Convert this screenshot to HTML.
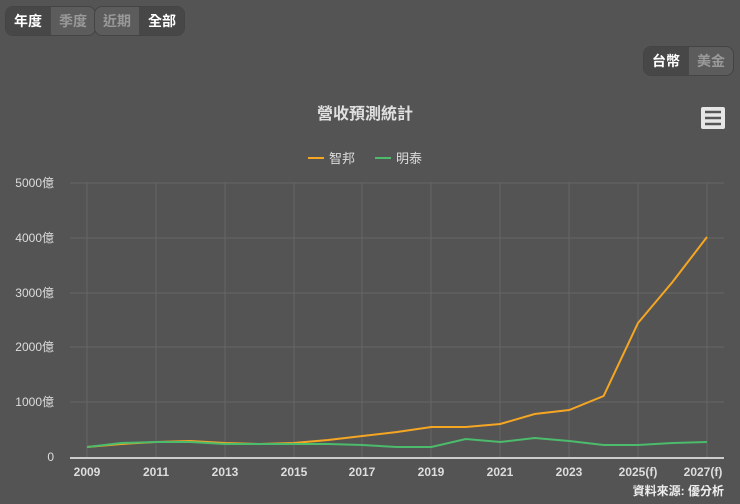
<!DOCTYPE html>
<html><head><meta charset="utf-8"><style>
body{margin:0;width:740px;height:504px;background:#545454;font-family:"Liberation Sans","Noto Sans CJK TC",sans-serif;position:relative;overflow:hidden}
.grp{position:absolute;display:flex;border:1px solid #444;border-radius:8px;overflow:hidden;background:#5c5c5c}
.grp div{padding:0 8px;height:28px;line-height:28px;font-size:14px;font-weight:bold;color:#999}
.grp div.on{background:#474747;color:#fff}
.grp div+div{border-left:1px solid #484848}
</style></head><body>
<div class="grp" style="left:5px;top:6px"><div class="on">年度</div><div>季度</div></div>
<div class="grp" style="left:94px;top:6px"><div>近期</div><div class="on">全部</div></div>
<div class="grp" style="left:643px;top:46px"><div class="on">台幣</div><div>美金</div></div>
<svg width="740" height="504" style="position:absolute;left:0;top:0" font-family="Liberation Sans,Noto Sans CJK TC,sans-serif">
<rect x="701" y="107" width="24" height="22" rx="2" fill="#e6e6e6"/>
<g stroke="#555" stroke-width="2.5"><line x1="705" y1="112" x2="721" y2="112"/><line x1="705" y1="118" x2="721" y2="118"/><line x1="705" y1="124" x2="721" y2="124"/></g>
<text x="365" y="119" fill="#e0e0e0" font-size="16" font-weight="bold" text-anchor="middle">營收預測統計</text>
<line x1="308" y1="158" x2="324" y2="158" stroke="#f5a623" stroke-width="2"/>
<text x="329" y="163" fill="#ddd" font-size="13">智邦</text>
<line x1="375" y1="158" x2="391" y2="158" stroke="#4cbb6c" stroke-width="2"/>
<text x="396" y="163" fill="#ddd" font-size="13">明泰</text>
<g stroke="#666" stroke-width="1">
<line x1="70" y1="183" x2="724" y2="183"/><line x1="70" y1="238" x2="724" y2="238"/><line x1="70" y1="293" x2="724" y2="293"/><line x1="70" y1="347" x2="724" y2="347"/><line x1="70" y1="402" x2="724" y2="402"/>
<line x1="87" y1="183" x2="87" y2="457"/><line x1="156" y1="183" x2="156" y2="457"/><line x1="225" y1="183" x2="225" y2="457"/><line x1="294" y1="183" x2="294" y2="457"/><line x1="362" y1="183" x2="362" y2="457"/><line x1="431" y1="183" x2="431" y2="457"/><line x1="500" y1="183" x2="500" y2="457"/><line x1="569" y1="183" x2="569" y2="457"/><line x1="638" y1="183" x2="638" y2="457"/><line x1="707" y1="183" x2="707" y2="457"/>
</g>
<line x1="70" y1="458" x2="724" y2="458" stroke="#ccc" stroke-width="2"/>
<g fill="#ddd" font-size="12" text-anchor="end">
<text x="54" y="187">5000億</text><text x="54" y="242">4000億</text><text x="54" y="297">3000億</text><text x="54" y="351">2000億</text><text x="54" y="406">1000億</text><text x="54" y="461">0</text>
</g>
<g fill="#ddd" font-size="12" font-weight="bold" text-anchor="middle">
<text x="87" y="476">2009</text><text x="156" y="476">2011</text><text x="225" y="476">2013</text><text x="294" y="476">2015</text><text x="362" y="476">2017</text><text x="431" y="476">2019</text><text x="500" y="476">2021</text><text x="569" y="476">2023</text><text x="638" y="476">2025(f)</text><text x="703" y="476">2027(f)</text>
</g>
<text x="724" y="495" fill="#eee" font-size="12" font-weight="bold" text-anchor="end">資料來源: 優分析</text>
<polyline fill="none" stroke="#f5a623" stroke-width="2" points="87,447 121.4,444 155.9,442 190.3,441 224.8,443 259.2,444 293.6,443 328.1,440 362.5,436 397,432 431.4,427 465.8,427 500.3,424 534.7,414 569.2,410 603.6,396 638,323 672.5,282 707,237"/>
<polyline fill="none" stroke="#4cbb6c" stroke-width="2" points="87,447 121.4,443 155.9,442 190.3,442 224.8,444 259.2,444 293.6,444 328.1,444 362.5,445 397,447 431.4,447 465.8,439 500.3,442 534.7,438 569.2,441 603.6,445 638,445 672.5,443 707,442"/>
</svg>
</body></html>
